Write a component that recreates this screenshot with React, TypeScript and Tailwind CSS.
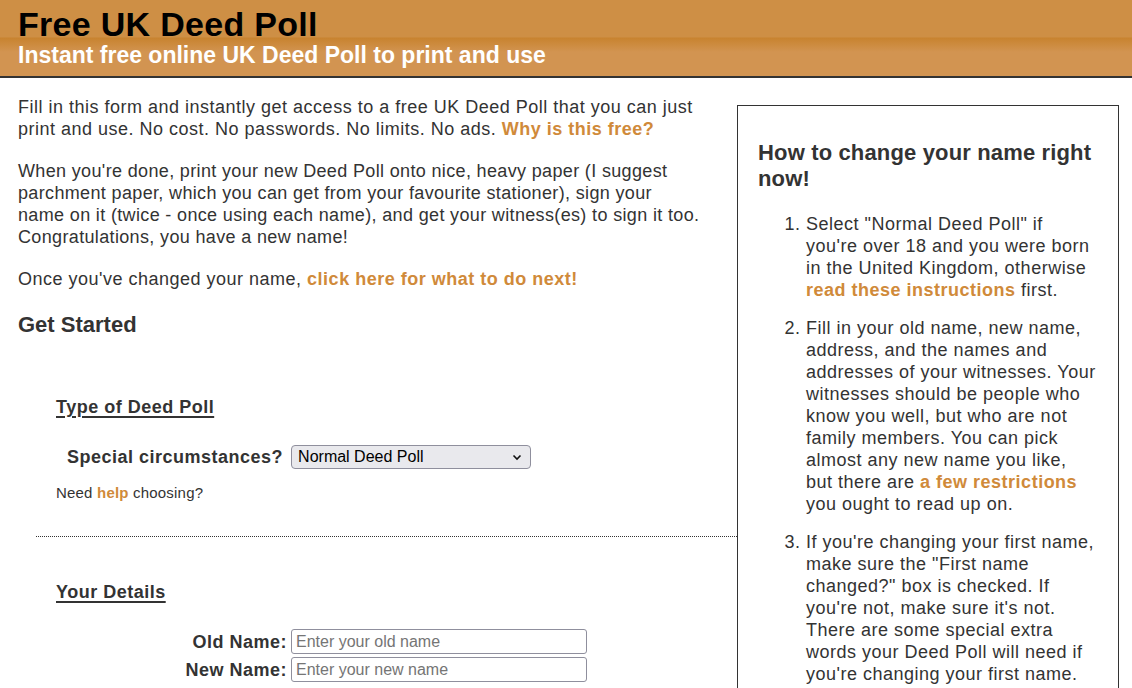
import React from "react";

const steps = [
  <>
    Select "Normal Deed Poll" if you're over 18 and you were born in the United Kingdom, otherwise{" "}
    <a className="font-bold text-[#d08a3a]">read these instructions</a> first.
  </>,
  <>
    Fill in your old name, new name, address, and the names and addresses of your witnesses. Your witnesses
    should be people who know you well, but who are not family members. You can pick almost any new name you
    like, but there are <a className="font-bold text-[#d08a3a]">a few restrictions</a> you ought to read up on.
  </>,
  <>
    If you're changing your first name, make sure the "First name changed?" box is checked. If you're not,
    make sure it's not. There are some special extra words your Deed Poll will need if you're changing your
    first name.
  </>,
];

export default function App() {
  return (
    <div className="min-h-[688px] bg-white font-['Liberation_Sans',Arial,sans-serif] text-[#333]">
      <header className="border-b-2 border-[#333] bg-[linear-gradient(to_bottom,#ce8f45_0px,#ce8f45_37px,#c8832f_38px,#d29451_52px,#d29451_100%)] px-[18px] pt-[6px] pb-[8px]">
        <h1 className="text-[34px] leading-[37px] font-bold tracking-[0.3px] text-black">Free UK Deed Poll</h1>
        <p className="text-[23px] leading-[25px] font-bold text-white">Instant free online UK Deed Poll to print and use</p>
      </header>

      <div className="flex">
        <main className="w-[737px] shrink-0 pt-[18px] pr-[3px] pl-[18px] text-[18px] leading-[22px] tracking-[0.5px]">
          <p className="mb-[20px] pr-[15px]">
            Fill in this form and instantly get access to a free UK Deed Poll that you can just print and use. No
            cost. No passwords. No limits. No ads. <a className="font-bold text-[#d08a3a]">Why is this free?</a>
          </p>
          <p className="mb-[20px] tracking-[0.35px]">
            When you're done, print your new Deed Poll onto nice, heavy paper (I suggest parchment paper, which you
            can get from your favourite stationer), sign your
            <br />
            name on it (twice - once using each name), and get your witness(es) to sign it too.
            <br />
            Congratulations, you have a new name!
          </p>
          <p>
            Once you've changed your name, <a className="font-bold text-[#d08a3a]">click here for what to do next!</a>
          </p>
          <h3 className="mt-[22px] text-[22px] leading-[26px] font-bold tracking-normal">Get Started</h3>

          <section className="mt-[58px] ml-[18px] pl-[20px]">
            <h4 className="font-bold underline decoration-2 underline-offset-[3px]">Type of Deed Poll</h4>
            <div className="mt-[27px] flex items-center gap-[8px] pl-[11px]">
              <label className="font-bold">Special circumstances?</label>
              <div className="flex h-[24px] w-[240px] items-center justify-between rounded-[4px] border border-[#8f8f9d] bg-[#e9e9ed] pr-[8px] pl-[6px] text-[16px] tracking-normal text-black">
                <span>Normal Deed Poll</span>
                <svg width="10" height="7" viewBox="0 0 10 7" fill="none" stroke="#111" strokeWidth="1.6">
                  <path d="M1.5 1.5 L5 5 L8.5 1.5" />
                </svg>
              </div>
            </div>
            <p className="mt-[15px] text-[15px] leading-[18px] tracking-[0.2px]">
              Need <a className="font-bold text-[#d08a3a]">help</a> choosing?
            </p>
          </section>

          <section className="mt-[34px] -mr-[3px] ml-[18px] border-t border-dotted border-[#333] pt-[44px] pl-[20px]">
            <h4 className="font-bold underline decoration-2 underline-offset-[3px]">Your Details</h4>
            <div className="mt-[26px] grid grid-cols-[231px_296px] items-center gap-x-[4px] gap-y-[3px]">
              <label className="text-right font-bold">Old Name:</label>
              <div className="flex h-[25px] items-center rounded-[3px] border border-[#8f8f9d] px-[4px] text-[16px] tracking-normal text-[#757575]">
                Enter your old name
              </div>
              <label className="text-right font-bold">New Name:</label>
              <div className="flex h-[25px] items-center rounded-[3px] border border-[#8f8f9d] px-[4px] text-[16px] tracking-normal text-[#757575]">
                Enter your new name
              </div>
            </div>
          </section>
        </main>

        <aside className="mt-[27px] w-[382px] shrink-0 border border-[#333] px-[20px] pt-[34px] pb-[20px]">
          <h3 className="text-[22px] leading-[26px] font-bold tracking-[0.15px]">How to change your name right now!</h3>
          <ol className="mt-[21px] list-decimal pl-[48px] text-[18px] leading-[22px] tracking-[0.5px]">
            {steps.map((s, i) => (
              <li key={i} className="mb-[16px]">
                {s}
              </li>
            ))}
          </ol>
        </aside>
      </div>
    </div>
  );
}
